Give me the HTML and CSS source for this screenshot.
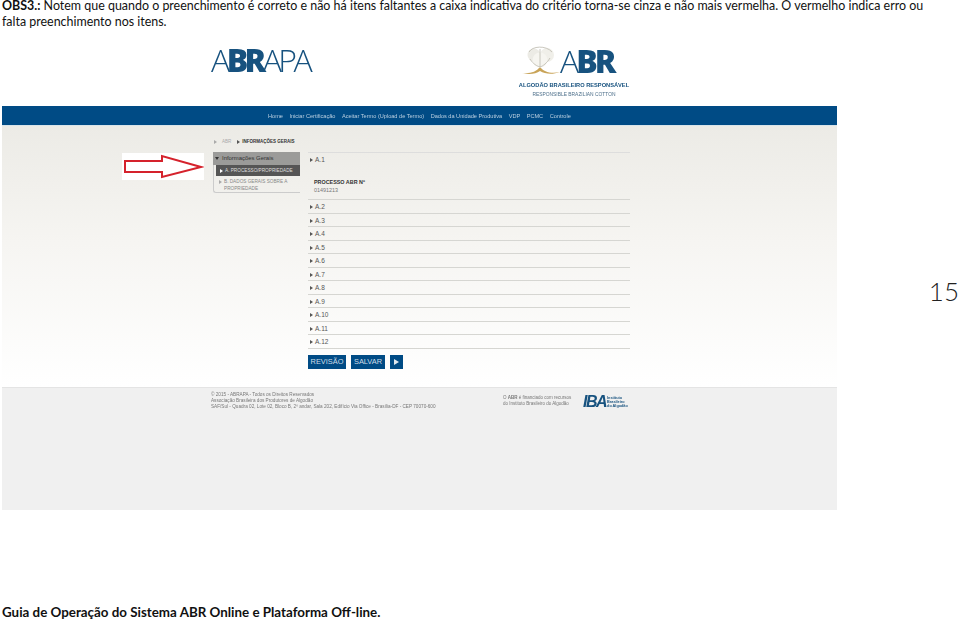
FILE: index.html
```html
<!DOCTYPE html>
<html lang="pt">
<head>
<meta charset="utf-8">
<title>Guia de Operação do Sistema ABR Online</title>
<link rel="stylesheet" href="styles.css">
</head>
<body>
<div class="page">
  <p class="obs"><span class="ln1"><b>OBS3.:</b> Notem que quando o preenchimento é correto e não há itens faltantes a caixa indicativa do critério torna-se cinza e não mais vermelha. O vermelho indica erro ou</span><span class="ln2">falta preenchimento nos itens.</span></p>
  <div class="middle">
    <div class="shot">
      <header class="logos">
        <div class="abrapa">A<b>BR</b>APA</div>
        <div class="abr">
          <div class="abr-mark">
            <svg class="cotton" width="38" height="29" viewBox="0 0 38 29">
              <path d="M0 27c8 1 14-1 18-6 4 5 11 7 20 5-8 3-15 2-20-1-4 3-11 4-18 2z" fill="#c9a458"/>
              <circle cx="12" cy="9" r="6.5" fill="#ecebe5"/><circle cx="25" cy="9" r="7" fill="#f0efe9"/><circle cx="18" cy="14" r="7.5" fill="#f6f5f0"/>
              <path d="M7 6c3-6 17-7 23 0M18 3v18M8 13c3 5 7 7 10 8 3-1 7-4 10-9" fill="none" stroke="#bdbaae" stroke-width=".8"/>
            </svg>
            <span class="abr-word">A<b>BR</b></span>
          </div>
          <div class="abr-pt">ALGODÃO BRASILEIRO RESPONSÁVEL</div>
          <div class="abr-en">RESPONSIBLE BRAZILIAN COTTON</div>
        </div>
      </header>
      <nav class="nav">
        <span>Home</span><span>Iniciar Certificação</span><span>Aceitar Termo (Upload de Termo)</span><span>Dados da Unidade Produtiva</span><span>VDP</span><span>PCMC</span><span>Controle</span>
      </nav>
      <main class="main">
        <div class="arrow-box">
          <svg width="82" height="27" viewBox="0 0 82 27">
            <path d="M3 8H40V3L79 14 40 24V19H3Z" fill="#fff" stroke="#d5222c" stroke-width="2"/>
          </svg>
        </div>
        <div class="crumbs"><i class="tri dim"></i><span class="c1">ABR</span><i class="tri"></i><b>INFORMAÇÕES GERAIS</b></div>
        <div class="cols">
          <aside class="side">
            <div class="side-head"><i class="tri-down"></i>Informações Gerais</div>
            <div class="side-on"><i class="tri white"></i>A. PROCESSO/PROPRIEDADE</div>
            <div class="side-off"><i class="tri dim"></i><span>B. DADOS GERAIS SOBRE A PROPRIEDADE</span></div>
          </aside>
          <section class="form">
            <div class="first">
              <div class="acc"><i class="tri"></i>A.1</div>
              <div class="field"><b>PROCESSO ABR Nº</b><span>01491213</span></div>
            </div>
            <div class="acc row"><i class="tri"></i>A.2</div>
            <div class="acc row"><i class="tri"></i>A.3</div>
            <div class="acc row"><i class="tri"></i>A.4</div>
            <div class="acc row"><i class="tri"></i>A.5</div>
            <div class="acc row"><i class="tri"></i>A.6</div>
            <div class="acc row"><i class="tri"></i>A.7</div>
            <div class="acc row"><i class="tri"></i>A.8</div>
            <div class="acc row"><i class="tri"></i>A.9</div>
            <div class="acc row"><i class="tri"></i>A.10</div>
            <div class="acc row"><i class="tri"></i>A.11</div>
            <div class="acc row"><i class="tri"></i>A.12</div>
            <div class="btns">
              <span class="btn b1">REVISÃO</span><span class="btn b2">SALVAR</span><span class="btn b3"><i class="play"></i></span>
            </div>
          </section>
        </div>
      </main>
      <footer class="foot">
        <div class="addr">© 2015 - ABRAPA - Todos os Direitos Reservados<br>Associação Brasileira dos Produtores de Algodão<br>SAF/Sul - Quadra 02, Lote 02, Bloco B, 2º andar, Sala 202, Edifício Via Office - Brasília-DF - CEP 70070-600</div>
        <div class="fund">O <b>ABR</b> é financiado com recursos<br>do Instituto Brasileiro do Algodão</div>
        <div class="iba"><span class="iba-m">IBA</span><span class="iba-t">Instituto<br>Brasileiro<br>do Algodão</span></div>
      </footer>
    </div>
    <div class="num">15</div>
  </div>
  <p class="guide">Guia de Operação do Sistema ABR Online e Plataforma Off-line.</p>
</div>
</body>
</html>
```
FILE: styles.css
```css
* { box-sizing: border-box; }
html, body { margin: 0; background: #fff; }
body { font-family: Lato, "Liberation Sans", sans-serif; color: #111; }
p { margin: 0; }
i { display: inline-block; font-style: normal; }

.page { width: 959px; height: 621px; padding-left: 2px; display: flex; flex-direction: column; overflow: hidden; }
.obs { font-size: 12.45px; height: 46px; }
.ln1, .ln2 { display: block; white-space: nowrap; }
.ln1 { line-height: 12px; }
.ln2 { line-height: 20px; }
.middle { display: flex; align-items: flex-start; }
.guide { margin-top: auto; font-size: 13.36px; line-height: 17px; font-weight: 700; }
.num { font-size: 26px; font-weight: 300; margin-left: auto; margin-top: 227px; line-height: 36px; color: #222; }

.shot { width: 835px; font-family: "Liberation Sans", sans-serif; filter: blur(.35px); }

.logos { height: 60px; display: flex; align-items: flex-start; padding-left: 209px; color: #17527f; }
.abrapa { font-family: "Open Sans", sans-serif; font-weight: 300; font-size: 32px; line-height: 28px; letter-spacing: -3.6px; width: 307px; }
.abrapa b { font-weight: 800; }
.abr { width: 112px; text-align: center; }
.abr-mark { height: 29px; display: flex; align-items: flex-end; padding-left: 4px; }
.cotton { display: block; }
.abr-word { font-family: "Open Sans", sans-serif; font-weight: 300; font-size: 32px; line-height: 28px; letter-spacing: -3px; }
.abr-word b { font-weight: 800; }
.abr-pt { font-size: 5.7px; font-weight: 700; line-height: 8px; margin-top: 6px; white-space: nowrap; }
.abr-en { font-size: 4.9px; line-height: 8px; margin-top: 2px; white-space: nowrap; color: #4d6f8a; }

.nav { height: 19px; background: #004b85; color: #b9cfe0; font-size: 5.6px; display: flex; align-items: center; gap: 6.5px; padding-left: 266px; }

.main { position: relative; height: 262px; padding: 13px 0 0 209px; background: linear-gradient(#ecebe6, #f6f5f2 45%, #fff 100%); border-top: 1px solid #d8e4ea; }
.arrow-box { position: absolute; left: 120px; top: 27px; width: 82px; height: 27px; background: #fff; }
.arrow-box svg { display: block; }

.tri { width: 0; height: 0; border-left: 3px solid #555; border-top: 2px solid transparent; border-bottom: 2px solid transparent; margin-right: 2px; vertical-align: middle; }
.tri.dim { border-left-color: #aaa; }
.tri.white { border-left-color: #fff; }
.tri-down { width: 0; height: 0; border-top: 3px solid #333; border-left: 2px solid transparent; border-right: 2px solid transparent; margin-right: 3px; vertical-align: middle; }

.crumbs { font-size: 4.5px; height: 13px; line-height: 6px; padding-left: 3px; color: #333; white-space: nowrap; }
.crumbs .c1 { color: #aaa; margin: 0 6px 0 3px; }
.cols { display: flex; }
.side { width: 87px; margin-left: 2px; margin-right: 8px; height: 41px; border-left: 1px solid #ccc; border-bottom: 1px solid #ccc; border-radius: 0 0 0 3px; }
.side-head { height: 13px; margin-left: -1px; background: #9b9b99; color: #333; font-size: 5.9px; line-height: 13px; padding-left: 2px; }
.side-on { height: 11px; margin-left: 2px; background: #555; color: #ddd; font-size: 4.7px; line-height: 11px; padding-left: 4px; white-space: nowrap; }
.side-off { display: flex; align-items: flex-start; color: #888; font-size: 4.7px; line-height: 6.5px; padding: 3px 0 0 5px; }
.side-off .tri { margin-top: 1px; }

.form { width: 322px; font-size: 6.5px; color: #555; border-top: 1px solid #ddd; }
.acc { white-space: nowrap; padding-left: 2px; }
.first { height: 47px; border-bottom: 1px solid #d6d6d2; padding-top: 2px; }
.first .acc { line-height: 10px; }
.field { padding: 13px 0 0 6px; line-height: 8px; }
.field b { display: block; font-size: 5.4px; color: #333; }
.field span { font-size: 5.4px; color: #777; }
.row { height: 13.5px; line-height: 13px; border-bottom: 1px solid #d6d6d2; }
.btns { display: flex; gap: 5px; margin-top: 6.5px; }
.btn { height: 14px; background: #004b85; color: #cfdde8; font-size: 7.4px; line-height: 14px; text-align: center; display: flex; align-items: center; justify-content: center; }
.b1 { width: 38px; }
.b2 { width: 34px; }
.b3 { width: 13px; }
.play { width: 0; height: 0; border-left: 5px solid #dfe8ef; border-top: 3px solid transparent; border-bottom: 3px solid transparent; }

.foot { height: 123px; background: #f0f0f0; border-top: 1px solid #e4e4e4; display: flex; align-items: flex-start; padding: 4px 0 0 209px; font-size: 4.67px; line-height: 6px; color: #777; }
.addr { width: 292px; white-space: nowrap; }
.fund { width: 80px; font-size: 4.5px; white-space: nowrap; padding-top: 3px; }
.iba { display: flex; align-items: center; gap: 1px; color: #17527f; padding-top: 3px; }
.iba-m { font-size: 16px; line-height: 14px; font-weight: 700; font-style: italic; letter-spacing: -1.5px; }
.iba-t { font-size: 3.8px; line-height: 4px; font-weight: 700; }
```
